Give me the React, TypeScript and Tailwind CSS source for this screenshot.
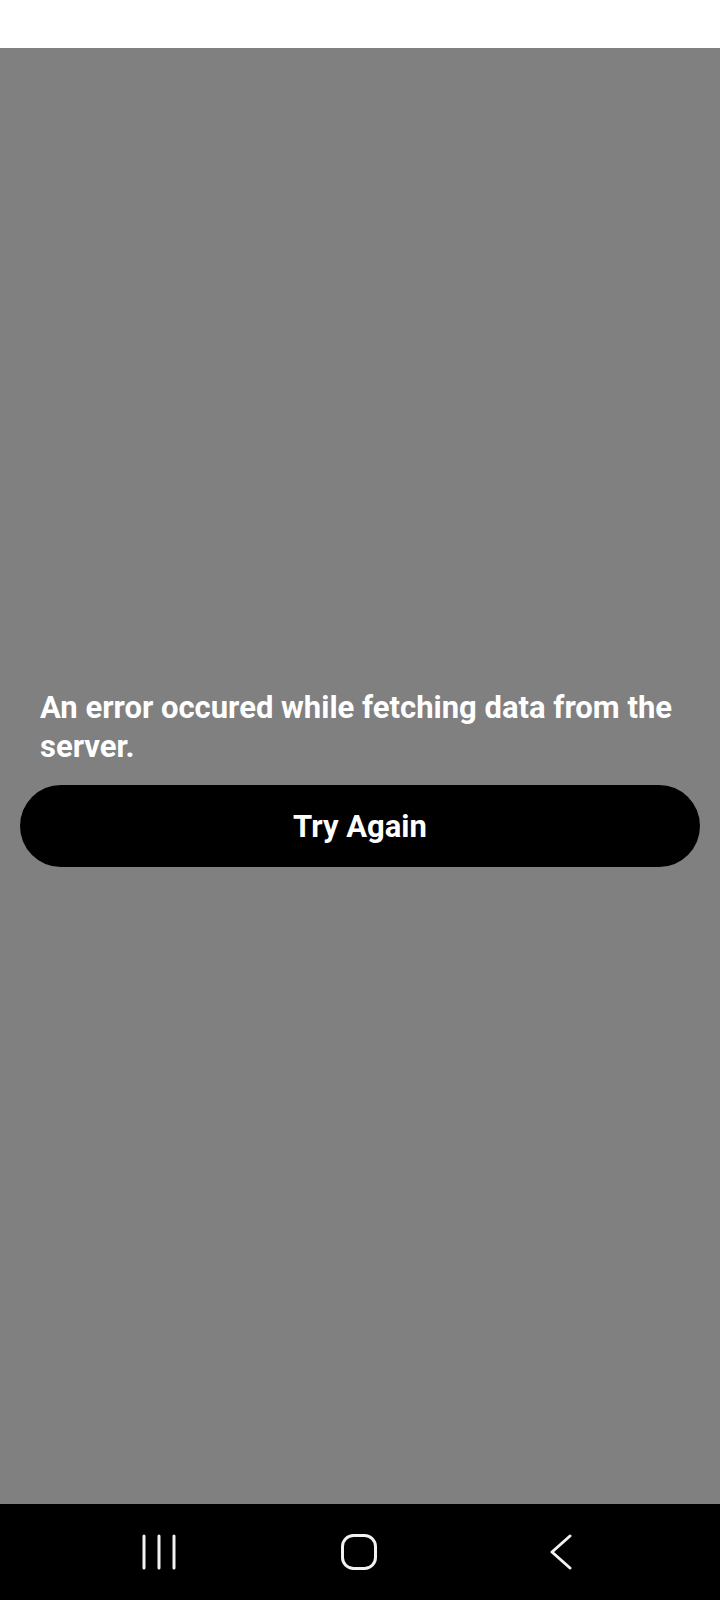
import React from 'react';

function NavBar() {
  return (
    <div className="h-[96px] bg-black flex items-center pl-[139px]">
      <div className="w-[40px] flex justify-center">
        <svg width="34" height="36" viewBox="0 0 34 36">
          <path d="M2 2v32M17 2v32M32 2v32" stroke="#f2f2f2" strokeWidth="3" strokeLinecap="round" />
        </svg>
      </div>
      <div className="w-[40px] flex justify-center ml-[160px]">
        <svg width="38" height="38" viewBox="0 0 38 38">
          <rect x="2.5" y="2.5" width="33" height="33" rx="11" fill="none" stroke="#f2f2f2" strokeWidth="3" />
        </svg>
      </div>
      <div className="w-[40px] flex justify-center ml-[162px]">
        <svg width="24" height="36" viewBox="0 0 24 36">
          <path d="M21 2L3 18l18 16" fill="none" stroke="#f2f2f2" strokeWidth="3" strokeLinecap="round" strokeLinejoin="round" />
        </svg>
      </div>
    </div>
  );
}

export default function App() {
  return (
    <div className="w-[720px] h-[1600px] flex flex-col font-['Roboto',sans-serif]">
      <div className="h-[48px] bg-white" />
      <div className="flex-1 bg-[#808080] flex flex-col justify-center pt-[2px]">
        <p className="px-[40px] text-[31px] leading-[39px] font-bold text-white">
          An error occured while fetching data from the server.
        </p>
        <button className="mx-[20px] mt-[19px] h-[82px] pt-[4px] rounded-full bg-black text-white text-[31px] font-bold">
          Try Again
        </button>
      </div>
      <NavBar />
    </div>
  );
}
